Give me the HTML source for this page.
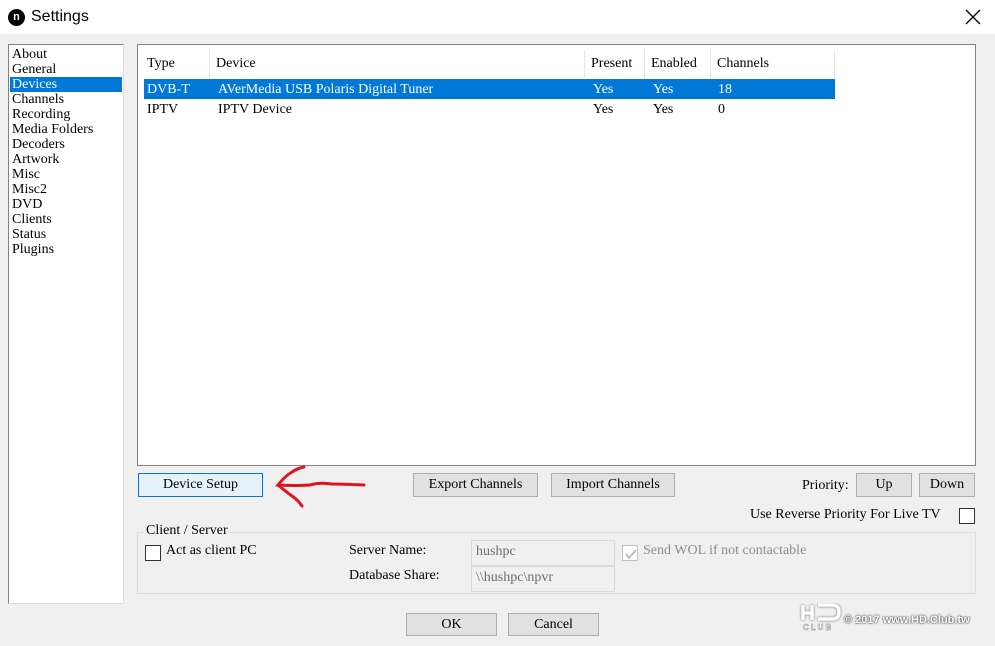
<!DOCTYPE html>
<html><head><meta charset="utf-8">
<style>
*{margin:0;padding:0;box-sizing:border-box}
body{width:995px;height:646px;background:#f0f0f0;font-family:"Liberation Serif","Noto Serif CJK SC",serif;font-size:14px;color:#000;position:relative;overflow:hidden}
.a{position:absolute}
.title{left:0;top:0;width:995px;height:34px;background:#fff}
.btn{position:absolute;background:#e1e1e1;border:1px solid #adadad;text-align:center;line-height:22px;font-size:14px}
.t{position:absolute;white-space:nowrap;line-height:15px}
.cb{position:absolute;width:16px;height:16px;border:1px solid #333;background:#fff}
.inp{position:absolute;background:#f0f0f0;border:1px solid #d9d9d9;color:#6d6d6d;padding-left:4px;line-height:22px}
.hd{position:absolute;top:50px;height:28px;border-right:1px solid #e5e5e5;padding-left:6px;line-height:28px}
</style></head><body>
<div class="a title"></div>
<div class="a" style="left:8px;top:9px;width:17px;height:17px;border-radius:50%;background:#000;color:#fff;font:bold 11px 'Liberation Sans',sans-serif;text-align:center;line-height:16px">n</div>
<div class="a" style="left:31px;top:8px;font:16px 'Liberation Sans',sans-serif">Settings</div>
<svg class="a" style="left:965px;top:9px" width="16" height="16"><path d="M1 1L15 15M15 1L1 15" stroke="#000" stroke-width="1.3"/></svg>

<div class="a" style="left:8px;top:44px;width:116px;height:560px;background:#fff;border:1px solid #828282;border-right-color:#ddd;border-bottom-color:#ddd"></div>
<div class="a" style="left:10px;top:77px;width:112px;height:15px;background:#0078d7"></div>
<div class="t" style="left:12px;top:47px">About<br>General<br><span style="color:#fff">Devices</span><br>Channels<br>Recording<br>Media Folders<br>Decoders<br>Artwork<br>Misc<br>Misc2<br>DVD<br>Clients<br>Status<br>Plugins</div>

<div class="a" style="left:137px;top:44px;width:839px;height:422px;background:#fff;border:1px solid #828282"></div>
<div class="hd" style="left:141px;width:69px">Type</div>
<div class="hd" style="left:210px;width:375px">Device</div>
<div class="hd" style="left:585px;width:60px">Present</div>
<div class="hd" style="left:645px;width:66px">Enabled</div>
<div class="hd" style="left:711px;width:124px">Channels</div>
<div class="a" style="left:144px;top:79px;width:691px;height:20px;background:#0078d7"></div>
<div class="t" style="left:147px;top:82px;color:#fff">DVB-T</div>
<div class="t" style="left:218px;top:82px;color:#fff">AVerMedia USB Polaris Digital Tuner</div>
<div class="t" style="left:593px;top:82px;color:#fff">Yes</div>
<div class="t" style="left:653px;top:82px;color:#fff">Yes</div>
<div class="t" style="left:718px;top:82px;color:#fff">18</div>
<div class="t" style="left:147px;top:102px">IPTV</div>
<div class="t" style="left:218px;top:102px">IPTV Device</div>
<div class="t" style="left:593px;top:102px">Yes</div>
<div class="t" style="left:653px;top:102px">Yes</div>
<div class="t" style="left:718px;top:102px">0</div>

<div class="btn" style="left:138px;top:473px;width:125px;height:24px;background:#e5f1fb;border-color:#0078d7">Device Setup</div>
<svg class="a" style="left:270px;top:464px" width="100" height="46"><path d="M94 21 Q70 20 62 20 Q50 18 40 21 Q25 22 8 21 Q15 12 22 8 Q28 4 34 3 M8 21 Q15 27 22 32 Q28 36 32 42" stroke="#e0141c" stroke-width="3" fill="none" stroke-linecap="round"/></svg>
<div class="btn" style="left:413px;top:473px;width:125px;height:24px">Export Channels</div>
<div class="btn" style="left:551px;top:473px;width:124px;height:24px">Import Channels</div>
<div class="t" style="left:802px;top:478px">Priority:</div>
<div class="btn" style="left:856px;top:473px;width:56px;height:24px">Up</div>
<div class="btn" style="left:919px;top:473px;width:56px;height:24px">Down</div>
<div class="t" style="left:750px;top:507px">Use Reverse Priority For Live TV</div>
<div class="cb" style="left:959px;top:508px"></div>

<div class="a" style="left:137px;top:532px;width:839px;height:62px;border:1px solid #dcdcdc"></div>
<div class="t" style="left:144px;top:523px;background:#f0f0f0;padding:0 2px">Client / Server</div>
<div class="cb" style="left:145px;top:545px"></div>
<div class="t" style="left:166px;top:543px">Act as client PC</div>
<div class="t" style="left:349px;top:543px">Server Name:</div>
<div class="t" style="left:349px;top:568px">Database Share:</div>
<div class="inp" style="left:471px;top:540px;width:144px;height:26px">hushpc</div>
<div class="inp" style="left:471px;top:566px;width:144px;height:26px">\\hushpc\npvr</div>
<div class="cb" style="left:622px;top:545px;border-color:#c0c0c0"></div>
<svg class="a" style="left:624px;top:547px" width="14" height="14"><path d="M2 7L5 11L12 3" stroke="#b0b0b0" stroke-width="1.6" fill="none"/></svg>
<div class="t" style="left:643px;top:543px;color:#8d8d8d">Send WOL if not contactable</div>

<div class="btn" style="left:406px;top:613px;width:91px;height:23px">OK</div>
<div class="btn" style="left:508px;top:613px;width:91px;height:23px">Cancel</div>

<svg class="a" style="left:798px;top:603px" width="48" height="28">
<g fill="none" stroke="#fff" stroke-width="3.5" style="filter:drop-shadow(0 0 1px #555)">
<path d="M5 2V17M5 10H14M14 2V17M20 2H34Q41 2 41 9Q41 16 34 16H20"/>
</g>
<text x="5" y="27" font-family="Liberation Sans" font-size="8" font-weight="bold" fill="#fff" stroke="#777" stroke-width="0.4" letter-spacing="2">CLUB</text>
</svg>
<div class="a" style="left:844px;top:614px;font:bold 11px 'Liberation Sans',sans-serif;color:#fff;text-shadow:0 0 2px #333,0 0 1px #333">© 2017 www.HD.Club.tw</div>
</body></html>
